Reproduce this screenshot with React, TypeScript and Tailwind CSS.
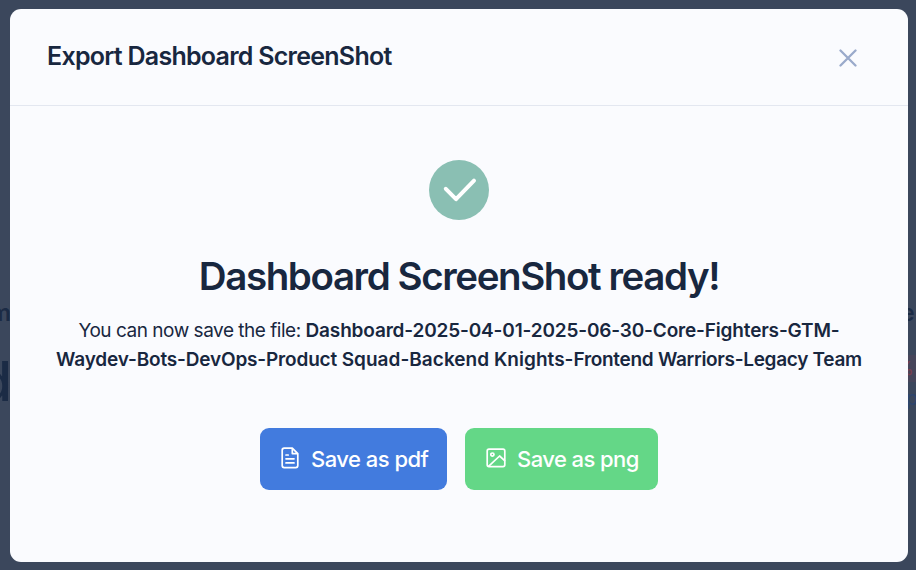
function CloseIcon() {
  return (
    <svg width="18" height="18" viewBox="0 0 18 18" fill="none" stroke="#9aaacb" strokeWidth="2.3" strokeLinecap="round">
      <path d="M1.5 1.5 16.5 16.5M16.5 1.5 1.5 16.5" />
    </svg>
  );
}

function CheckBadge() {
  return (
    <svg width="60" height="60" viewBox="0 0 60 60" fill="none">
      <circle cx="30" cy="30" r="30" fill="#8abfb3" />
      <path d="M16.8 28.8 27 39.2 45 20.6" stroke="#fff" strokeWidth="4" strokeLinecap="round" strokeLinejoin="round" />
    </svg>
  );
}

function FileIcon() {
  return (
    <svg width="18" height="22" viewBox="0 0 18 22" fill="none" stroke="#fff" strokeWidth="1.7" strokeLinecap="round" strokeLinejoin="round">
      <path d="M11.3 1.2H3.2a2 2 0 0 0-2 2v15.4a2 2 0 0 0 2 2h11.6a2 2 0 0 0 2-2V6.6L11.3 1.2v5.4h5.5" />
      <path d="M5 8h2.2M5 11.8h8M5 15.9h8" />
    </svg>
  );
}

function ImageIcon() {
  return (
    <svg width="20" height="20" viewBox="0 0 20 20" fill="none" stroke="#fff" strokeWidth="1.7" strokeLinecap="round" strokeLinejoin="round">
      <rect x="1.2" y="1.2" width="17.6" height="17.4" rx="1.8" />
      <circle cx="6.4" cy="6.6" r="1.6" />
      <path d="M2.8 18.2 13.6 8l5 4.6" />
    </svg>
  );
}

function Backdrop() {
  return (
    <div className="absolute inset-0 overflow-hidden text-[#1b2b45]" aria-hidden="true">
      <span className="absolute right-[905px] top-[299px] text-[24px] leading-[28px] font-semibold">m</span>
      <span className="absolute right-[904px] top-[346px] text-[55px] leading-[70px] font-medium">d</span>
      <span className="absolute left-[901px] top-[299px] text-[23px] leading-[28px] font-semibold">e</span>
      <span className="absolute left-[896px] top-[355px] h-[27px] w-[20px] bg-[#46455a]" />
      <span className="absolute right-[2px] top-[357px] text-[19px] leading-[24px] text-[#7a3d4c]">%</span>
      <span className="absolute left-[906px] top-[386px] text-[20px] leading-[24px] text-[#2d456e]">p</span>
    </div>
  );
}

export default function App() {
  return (
    <div className="relative h-[570px] w-[916px] overflow-hidden bg-[#3b475c] pt-[9px] pl-[10px] font-['Inter','Liberation_Sans',sans-serif] text-[#18273f]">
      <Backdrop />
      <section role="dialog" className="relative flex h-[553px] w-[898px] flex-col rounded-[11px] bg-[#fafbfe]">
        <header className="flex h-[97px] items-center justify-between border-b border-[#e3e7f0] pr-[51px] pl-[37px]">
          <h1 className="-mt-[2px] text-[25px] leading-8 font-semibold tracking-[-0.74px] whitespace-nowrap">Export Dashboard ScreenShot</h1>
          <button aria-label="Close" className="mt-[2px]">
            <CloseIcon />
          </button>
        </header>
        <div className="flex flex-col items-center pt-[54px]">
          <CheckBadge />
          <h2 className="mt-[32px] text-[38.5px] leading-[48px] font-semibold tracking-[-1.4px] whitespace-nowrap">Dashboard ScreenShot ready!</h2>
          <p className="mt-[16px] text-center text-[19px] leading-[29px] whitespace-nowrap">
            <span className="tracking-[-0.48px]">You can now save the file: </span>
            <strong className="font-semibold tracking-[-0.16px]">Dashboard-2025-04-01-2025-06-30-Core-Fighters-GTM-</strong>
            <br />
            <strong className="font-semibold tracking-[-0.17px]">Waydev-Bots-DevOps-Product <span className="tracking-[0.03px]">Squad-Backend Knights-</span><span className="tracking-[-0.3px]">Frontend Warriors-Legacy Team</span></strong>
          </p>
          <div className="mt-[54px] flex gap-[18px] text-[22px] leading-7 font-medium text-white">
            <button className="flex h-[62px] w-[187px] items-center rounded-[9px] bg-[#427bde] pl-[21px]">
              <span className="mr-[12px] -mt-[3px]"><FileIcon /></span>
              <span className="tracking-[-0.52px] whitespace-nowrap">Save as pdf</span>
            </button>
            <button className="flex h-[62px] w-[193px] items-center rounded-[9px] bg-[#64d787] pl-[21px]">
              <span className="mr-[11px] -mt-[3px]"><ImageIcon /></span>
              <span className="tracking-[-0.57px] whitespace-nowrap">Save as png</span>
            </button>
          </div>
        </div>
      </section>
    </div>
  );
}
